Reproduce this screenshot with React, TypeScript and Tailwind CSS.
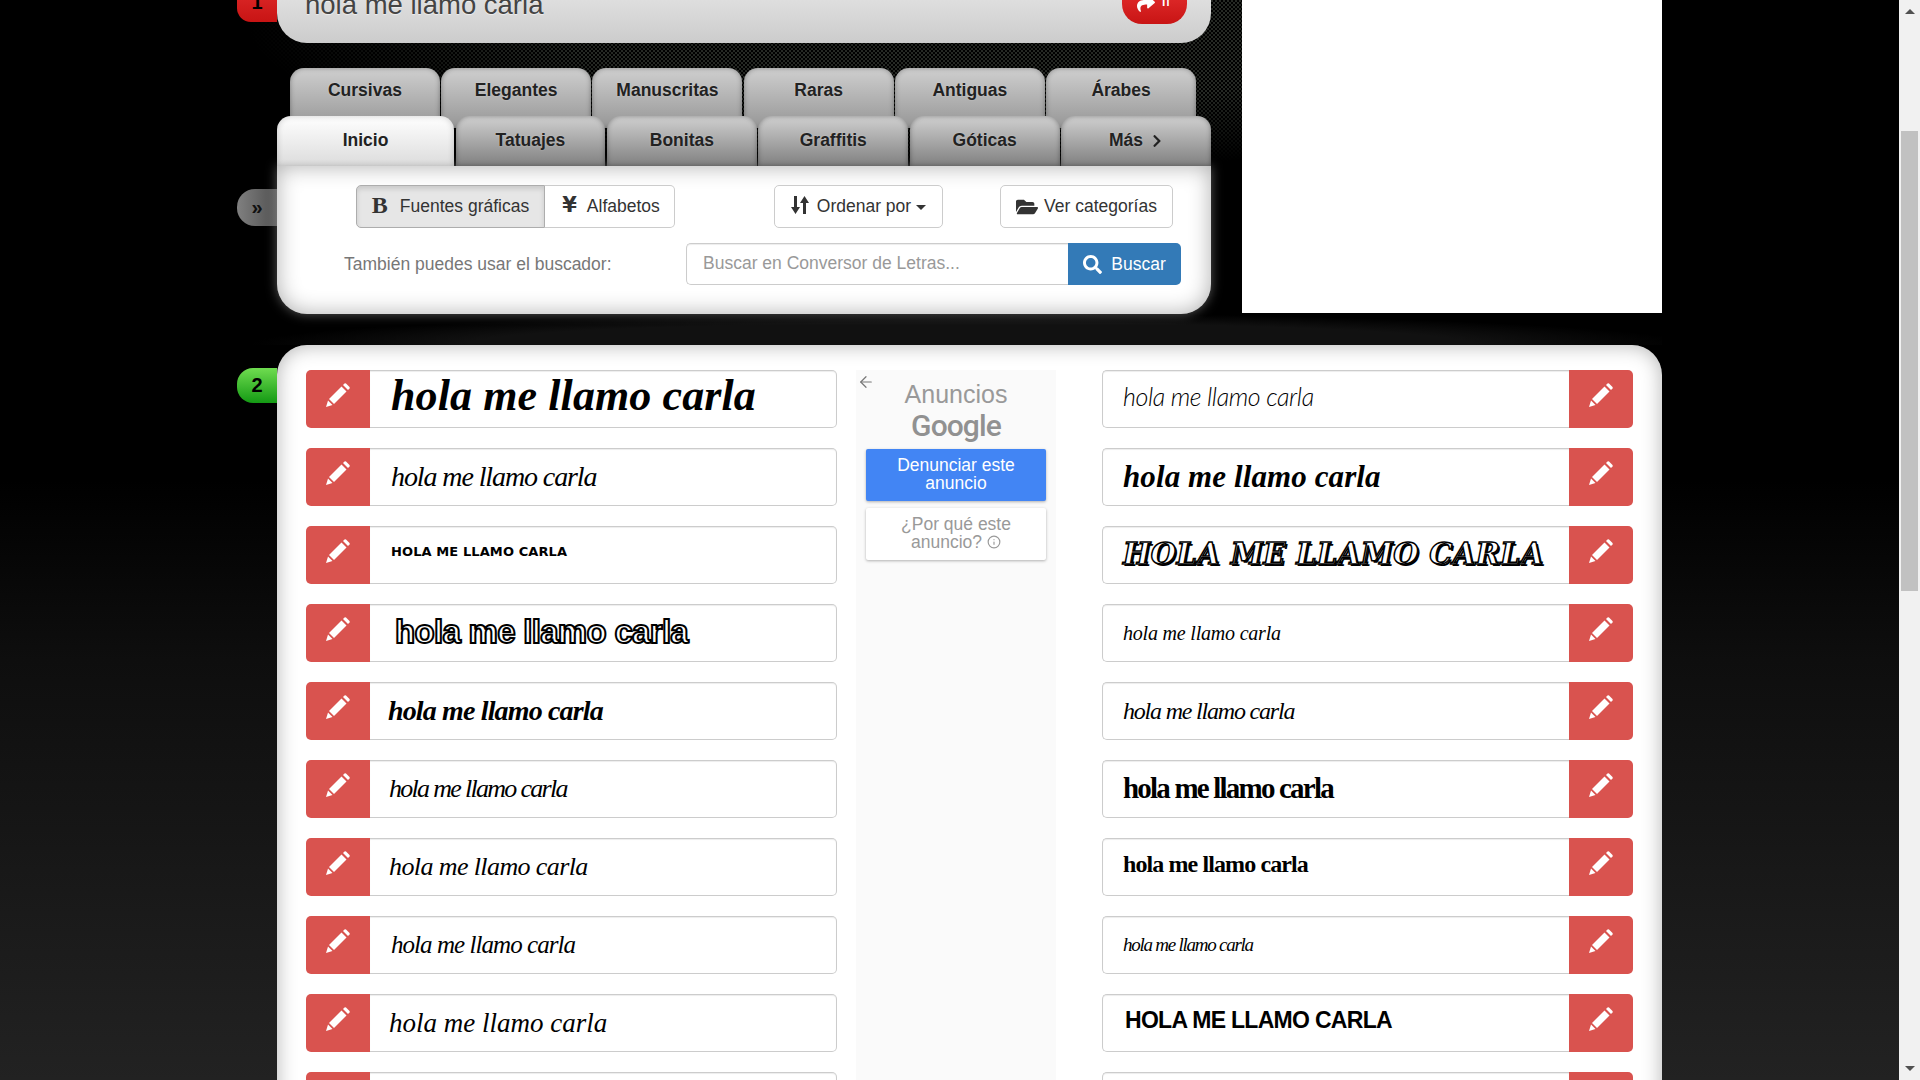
import React from "react";
import { FaShare, FaFolderOpen, FaSearch, FaChevronRight } from "react-icons/fa";
import { ArrowLeft, Info } from "lucide-react";

const sans = "font-['Liberation_Sans',Arial,sans-serif]";

type Row = { cls: string };

const left: Row[] = [
  { cls: "font-['Liberation_Serif',serif] italic text-[44px] leading-[44px] tracking-[0.1px] -mt-[6px] font-bold" },
  { cls: "font-['Liberation_Serif',serif] italic text-[28px] leading-[30px] tracking-[-1.1px]" },
  { cls: "font-['DejaVu_Sans',sans-serif] font-bold uppercase text-[13px] leading-[16px] tracking-[0.1px] -mt-[6px]" },
  { cls: "font-['Liberation_Sans',sans-serif] font-bold text-[33px] leading-[36px] text-white [-webkit-text-stroke:2px_#000] tracking-[-0.7px] pl-[4px] -mt-[2px]" },
  { cls: "font-['Liberation_Serif',serif] italic font-bold text-[28px] leading-[30px] tracking-[-0.85px] -ml-[3px]" },
  { cls: "font-['Liberation_Serif',serif] italic text-[26px] leading-[30px] tracking-[-1.7px] -ml-[2px]" },
  { cls: "font-['Liberation_Serif',serif] italic text-[26px] leading-[30px] tracking-[-0.6px] -ml-[2px]" },
  { cls: "font-['Liberation_Serif',serif] italic text-[25px] leading-[30px] tracking-[-0.95px]" },
  { cls: "font-['Liberation_Serif',serif] italic text-[27px] leading-[30px] tracking-[0px] -ml-[2px]" },
  { cls: "" },
];

const right: Row[] = [
  { cls: "font-['Lato',sans-serif] italic font-light text-[25px] leading-[28px] tracking-[-0.4px] -mt-[6px]" },
  { cls: "font-['Liberation_Serif',serif] italic font-bold text-[31px] leading-[32px] tracking-[0.1px] -mt-[1px]" },
  { cls: "font-['DejaVu_Serif',serif] font-bold italic uppercase text-[29px] leading-[32px] tracking-[0.4px] text-white [-webkit-text-stroke:1.5px_#000] [text-shadow:2px_2px_0_#000] -mt-[3px]" },
  { cls: "font-['Liberation_Serif',serif] italic text-[20px] leading-[24px] tracking-[-0.2px]" },
  { cls: "font-['Liberation_Serif',serif] italic text-[24px] leading-[30px] tracking-[-1.2px]" },
  { cls: "font-['Liberation_Serif',serif] font-bold text-[29px] leading-[34px] tracking-[-1.8px] -mt-[3px]" },
  { cls: "font-['Liberation_Serif',serif] text-[24px] leading-[30px] tracking-[-0.9px] font-bold -mt-[7px]" },
  { cls: "font-['Liberation_Serif',serif] italic text-[19px] leading-[28px] tracking-[-1.25px]" },
  { cls: "font-['Liberation_Sans',sans-serif] font-bold uppercase text-[23px] leading-[28px] tracking-[-0.7px] -mt-[7px] pl-[2px]" },
  { cls: "" },
];

function Pencil() {
  return (
    <svg viewBox="0 0 24 24" className="h-[24px] w-[24px] fill-white">
      <path d="M15.5 3.5 L20.5 8.5 L8 21 L3 16 Z" />
      <path d="M2 17.5 L6.5 22 L0 24 Z" />
      <path d="M17 2 L18.5 .5 Q19.2 0 20 .5 L23.5 4 Q24 4.8 23.5 5.5 L22 7 Z" />
    </svg>
  );
}

function SortIcon() {
  return (
    <svg viewBox="0 0 18 18" className="h-[18px] w-[18px] shrink-0 fill-[#333]">
      <path d="M3 0 H6 V11 H9 L4.5 18 L0 11 H3 Z" />
      <path d="M12 18 H15 V7 H18 L13.5 0 L9 7 H12 Z" />
    </svg>
  );
}

function RedBtn({ side }: { side: "l" | "r" }) {
  return (
    <span
      className={`flex w-[64px] shrink-0 items-start justify-center bg-[#d9534f] pt-[13px] ${
        side === "l" ? "rounded-l-[5px]" : "rounded-r-[5px]"
      }`}
    >
      <Pencil />
    </span>
  );
}

function FontRow({ row, side }: { row: Row; side: "l" | "r" }) {
  const box = (
    <span
      className={`flex min-w-0 flex-1 items-center border border-[#ccc] bg-white shadow-[inset_0_1px_1px_rgba(0,0,0,0.075)] ${
        side === "l" ? "rounded-r-[5px] border-l-0 pl-[21px]" : "rounded-l-[5px] border-r-0 pl-[20px]"
      }`}
    >
      <span className={`block whitespace-nowrap text-black ${row.cls}`}>hola me llamo carla</span>
    </span>
  );
  return (
    <div className="flex h-[58px] shrink-0">
      {side === "l" ? <RedBtn side="l" /> : null}
      {box}
      {side === "r" ? <RedBtn side="r" /> : null}
    </div>
  );
}

function Tab({
  label,
  active,
  wide,
  upper,
  children,
}: {
  label: string;
  active?: boolean;
  wide?: boolean;
  upper?: boolean;
  children?: React.ReactNode;
}) {
  return (
    <div
      className={`flex h-full items-start justify-center gap-[8px] rounded-t-[14px] text-[17.5px] font-bold leading-[25px] text-[#222] [text-shadow:0_0_2px_rgba(255,255,255,0.35)] ${
        upper ? "pt-[10px]" : "pt-[12px]"
      } ${wide ? "w-[177px] shrink-0" : "min-w-0 flex-1"} ${
        active
          ? "bg-[linear-gradient(#ffffff,#dcdcdc)] shadow-[inset_0_0_6px_rgba(0,0,0,0.2)]"
          : upper
            ? "bg-[linear-gradient(#cfcfcf,#969696)] shadow-[inset_0_0_5px_rgba(0,0,0,0.35)]"
            : "bg-[linear-gradient(#d0d0d0,#808080)] shadow-[inset_0_0_5px_rgba(0,0,0,0.35)]"
      }`}
    >
      {label}
      {children}
    </div>
  );
}

export default function App() {
  return (
    <div className={`flex h-screen w-full overflow-hidden ${sans}`}>
      <main className="min-w-0 flex-1 bg-[linear-gradient(#000000_0px,#000000_480px,#0e0e0e_660px,#222222_1080px)] pl-[237px]">
        {/* section 1 */}
        <div className="flex h-[345px] w-[1425px] items-start bg-[radial-gradient(ellipse_720px_32px_at_733px_345px,#111111_70%,transparent_100%),radial-gradient(ellipse_720px_140px_at_733px_30px,rgba(0,0,0,0.35)_55%,#000000_100%),repeating-conic-gradient(#3a3f38_0_25%,#000000_0_50%)] bg-[length:100%_100%,100%_100%,4px_4px]">
          <div className="flex w-[974px] shrink-0">
            <div className="flex w-[40px] shrink-0 flex-col">
              <div className="-mt-[38px] flex h-[60px] items-end justify-center rounded-l-[14px] bg-[linear-gradient(#f03a3a,#c81414)] pb-[8px] text-[20px] font-bold leading-[24px] text-black">
                1
              </div>
              <div className="mt-[167px] flex h-[37px] items-center justify-center rounded-l-[18px] bg-[linear-gradient(90deg,#808080,#505050)] pb-[2px] text-[20px] font-bold leading-[24px] text-[#111]">
                »
              </div>
            </div>
            <div className="flex w-[934px] shrink-0 flex-col">
              <div className="-mt-[57px] flex h-[100px] items-end justify-between rounded-b-[30px] bg-[linear-gradient(#f6f6f6,#cccccc)] pb-[24px] pl-[28px] pr-[24px]">
                <span className="text-[27.5px] leading-[28px] text-[#444] [text-shadow:0_1px_1px_rgba(255,255,255,0.6)]">
                  hola me llamo carla
                </span>
                <span className="-mb-[5px] flex h-[50px] w-[65px] items-end justify-center gap-[6px] rounded-b-[20px] rounded-t-[10px] bg-[linear-gradient(#f03a3a,#c81414)] pb-[11px] text-[17.5px] text-white">
                  <FaShare className="h-[18px] w-[18px]" />
                  Ir
                </span>
              </div>
              <div className="relative mt-[25px] flex h-[60px] gap-[1.3px] pl-[13px] pr-[15px]">
                {["Cursivas", "Elegantes", "Manuscritas", "Raras", "Antiguas", "Árabes"].map((t) => (
                  <Tab key={t} label={t} upper />
                ))}
              </div>
              <div className="relative -mt-[12px] flex h-[50px] gap-[1.5px]">
                <Tab label="Inicio" active wide />
                {["Tatuajes", "Bonitas", "Graffitis", "Góticas"].map((t) => (
                  <Tab key={t} label={t} />
                ))}
                <Tab label="Más">
                  <FaChevronRight className="mt-[6px] h-[14px] w-[12px]" />
                </Tab>
              </div>
              <div className="flex h-[148px] flex-col rounded-b-[30px] bg-white pl-[79px] pr-[30px] pt-[19px] shadow-[inset_0_0_22px_rgba(0,0,0,0.32),0_0_12px_rgba(255,255,255,0.35)]">
                <div className="flex h-[43px] items-stretch text-[17.5px] text-[#333]">
                  <div className="flex w-[189px] items-center justify-center gap-[12px] rounded-l-[5px] border border-[#adadad] bg-[#e6e6e6] shadow-[inset_0_3px_5px_rgba(0,0,0,0.125)]">
                    <span className="-mt-[3px] font-['Liberation_Serif',serif] text-[24px] font-bold leading-[24px]">B</span>
                    Fuentes gráficas
                  </div>
                  <div className="flex w-[130px] items-center justify-center gap-[10px] rounded-r-[5px] border border-l-0 border-[#ccc] bg-white pl-[3px]">
                    <span className="-mt-[3px] font-['DejaVu_Sans',sans-serif] text-[21px] font-bold leading-[22px]">¥</span>
                    Alfabetos
                  </div>
                  <div className="ml-[99px] flex w-[169px] items-center justify-center gap-[8px] rounded-[5px] border border-[#ccc] bg-white">
                    <span className="-mt-[3px]">
                      <SortIcon />
                    </span>
                    <span>Ordenar por</span>
                    <span className="-ml-[3px] mt-[2px] h-0 w-0 border-x-[5px] border-t-[5px] border-x-transparent border-t-[#333]" />
                  </div>
                  <div className="ml-[57px] flex w-[173px] items-center justify-center gap-[6px] rounded-[5px] border border-[#ccc] bg-white">
                    <FaFolderOpen className="h-[20px] w-[22px]" />
                    Ver categorías
                  </div>
                </div>
                <div className="mt-[15px] flex h-[42px] items-center">
                  <span className="ml-[-12px] w-[342px] shrink-0 text-[17.5px] text-[#777]">También puedes usar el buscador:</span>
                  <div className="flex h-[42px] w-[382px] shrink-0 items-center rounded-l-[5px] border border-r-0 border-[#ccc] bg-white pb-[1px] pl-[16px] text-[17.5px] text-[#999] shadow-[inset_0_1px_1px_rgba(0,0,0,0.075)]">
                    Buscar en Conversor de Letras...
                  </div>
                  <div className="flex h-[42px] w-[113px] shrink-0 items-center justify-center gap-[9px] rounded-r-[5px] bg-[#337ab7] text-[17.5px] text-white">
                    <FaSearch className="h-[19px] w-[19px]" />
                    Buscar
                  </div>
                </div>
              </div>
            </div>
          </div>
          <div className="ml-[31px] h-[313px] w-[420px] shrink-0 bg-white" />
        </div>

        {/* section 2 */}
        <div className="flex w-[1425px] items-start">
          <div className="mt-[23px] flex h-[35px] w-[40px] shrink-0 items-center justify-center rounded-l-[16px] bg-[linear-gradient(#6fdc50,#149a14)] pb-[1px] text-[20px] font-bold leading-[24px] text-black">
            2
          </div>
          <div className="flex h-[800px] min-w-0 flex-1 gap-[19px] rounded-t-[30px] bg-white pl-[29px] pr-[29px] pt-[25px] shadow-[inset_0_0_20px_rgba(0,0,0,0.3)]">
            <div className="flex w-[531px] shrink-0 flex-col gap-[20px]">
              {left.map((r, i) => (
                <FontRow key={i} row={r} side="l" />
              ))}
            </div>
            <div className="flex w-[200px] shrink-0 flex-col items-center bg-[#fafafa] px-[10px] text-center">
              <div className="h-[24px] self-start">
                <ArrowLeft className="ml-[-9px] mt-[3px] h-[18px] w-[18px] text-[#777]" strokeWidth={1.6} />
              </div>
              <div className="mt-[-15px] text-[25px] leading-[30px] text-[#999]">Anuncios</div>
              <div className="font-['Roboto',sans-serif] text-[30px] font-medium leading-[33px] tracking-[-0.9px] text-[#919191]">Google</div>
              <div className="mt-[7px] flex h-[52px] w-[180px] items-center justify-center rounded-[2px] bg-[#4285f4] pb-[1px] text-[17.5px] leading-[17.5px] text-white shadow-[0_1px_3px_rgba(0,0,0,0.3)]">
                Denunciar este<br />anuncio
              </div>
              <div className="mt-[7px] flex h-[52px] w-[180px] items-center justify-center rounded-[2px] bg-white pb-[1px] text-[17.5px] leading-[17.5px] text-[#999] shadow-[0_1px_3px_rgba(0,0,0,0.3)]">
                <span>
                  ¿Por qué este<br />anuncio? <Info className="inline h-[14px] w-[14px] align-[-1px]" />
                </span>
              </div>
            </div>
            <div className="ml-[27px] flex w-[531px] shrink-0 flex-col gap-[20px]">
              {right.map((r, i) => (
                <FontRow key={i} row={r} side="r" />
              ))}
            </div>
          </div>
        </div>
      </main>

      {/* scrollbar */}
      <div className="flex h-full w-[21px] shrink-0 flex-col items-center bg-[#f1f1f1]">
        <div className="mt-[9px] h-0 w-0 border-x-[5px] border-b-[5px] border-x-transparent border-b-[#505050]" />
        <div className="mt-[117px] h-[460px] w-[17px] bg-[#c1c1c1]" />
        <div className="mb-[9px] mt-auto h-0 w-0 border-x-[5px] border-t-[5px] border-x-transparent border-t-[#505050]" />
      </div>
    </div>
  );
}
